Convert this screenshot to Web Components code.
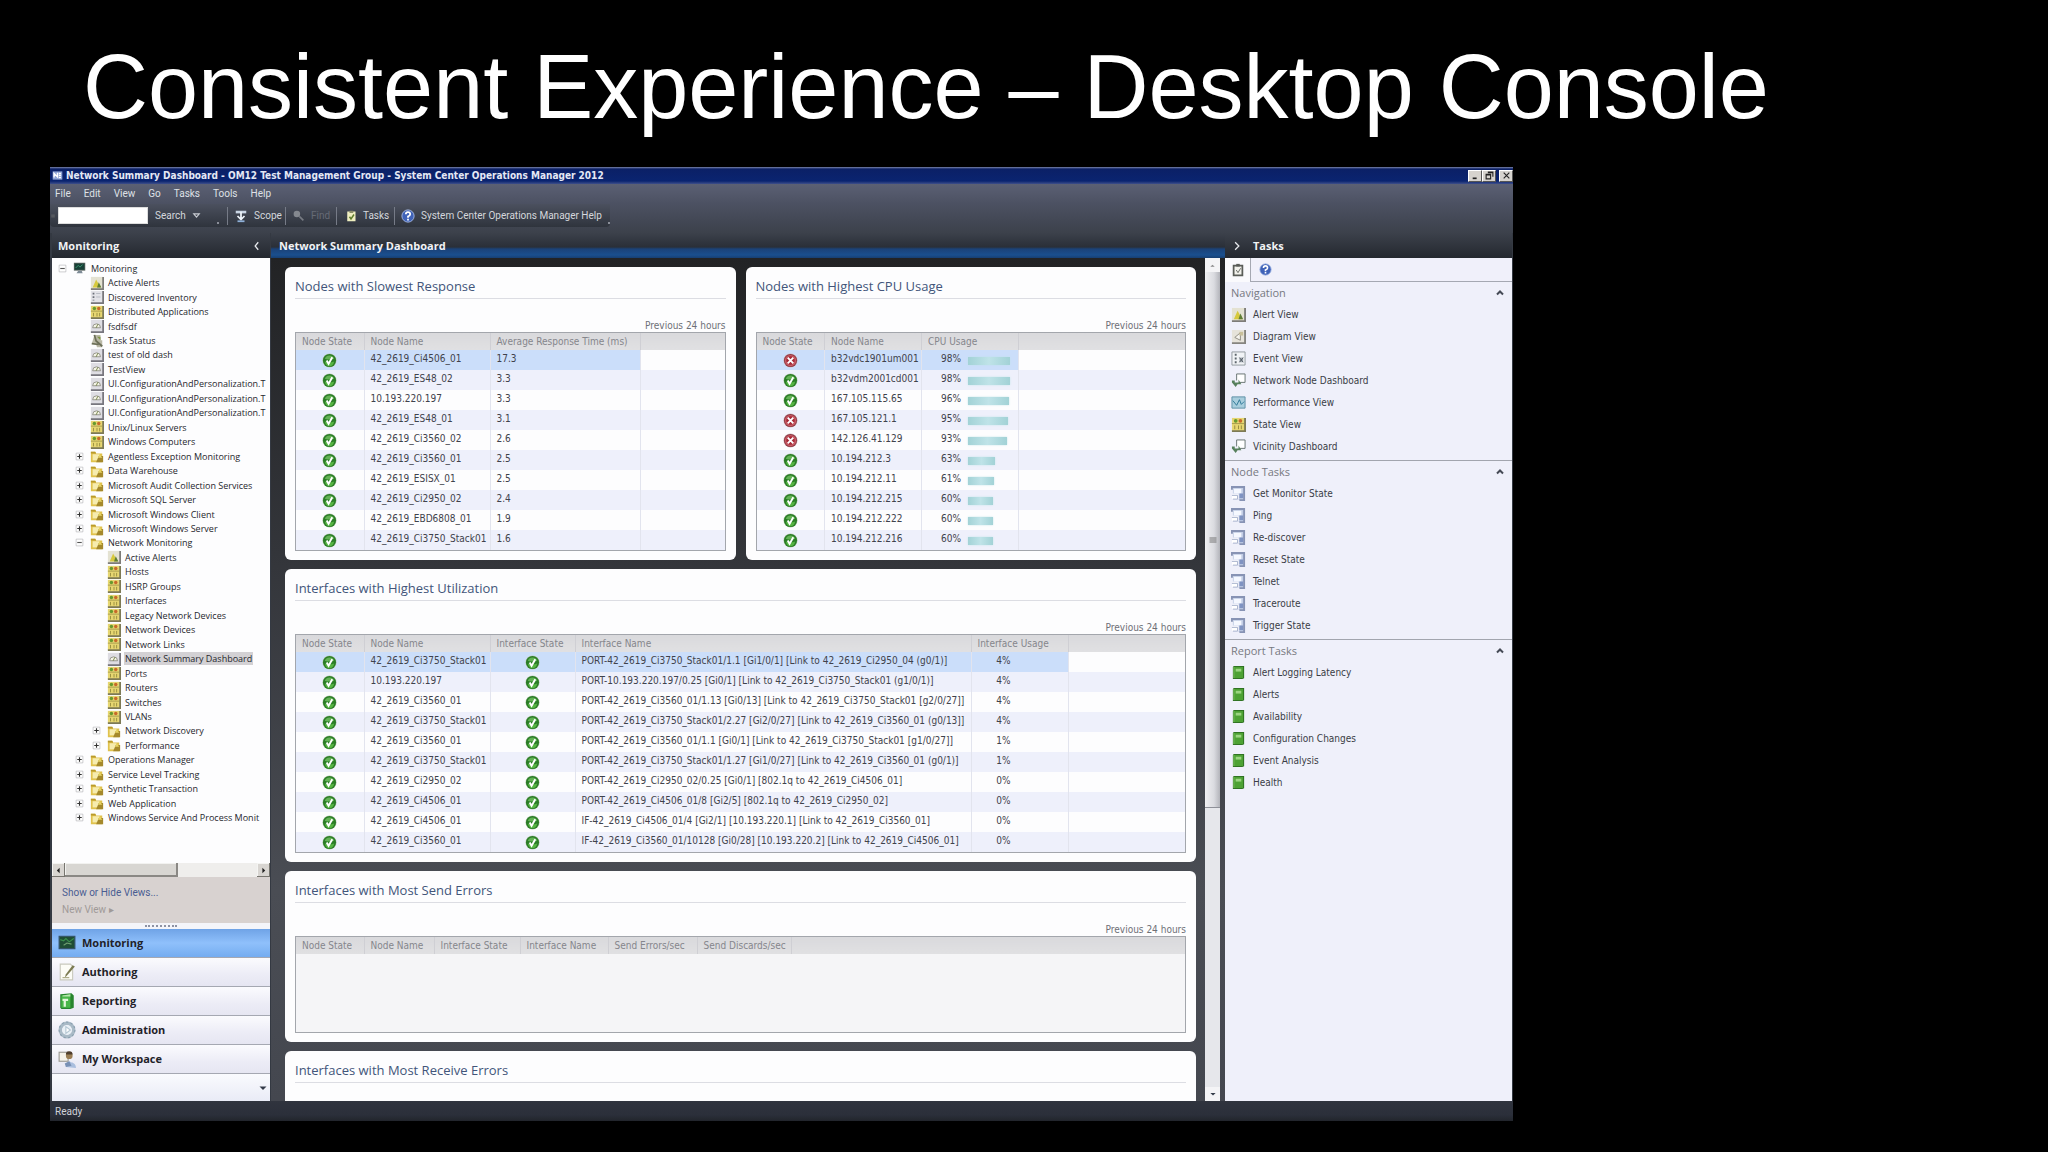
<!DOCTYPE html>
<html lang="en">
<head>
<meta charset="utf-8">
<title>Consistent Experience – Desktop Console</title>
<style>
html,body{margin:0;height:100%;background:#000}
body{font-family:"DejaVu Sans Condensed","Liberation Sans",sans-serif;font-size:10px;color:#3c3f48}
</style>
</head>
<body>
<slide-page></slide-page>
<script>
const ICONS={
 monitor:'<rect x="1" y="2" width="13" height="9" fill="#55605c"/><rect x="2" y="3" width="11" height="7" fill="#174037"/><path d="M3 8l3-3 2 2 3-3" stroke="#3f9b74" fill="none"/><path d="M6 11h4l1 3H4z" fill="#7e8b96"/>',
 alert:'<rect x="1" y="1" width="14" height="14" fill="#e4e2d2"/><path d="M15 1v14H1" fill="none" stroke="#7d7c78" stroke-width="2"/><path d="M7 4l5 9H3z" fill="#d6c93d"/><path d="M10 7l3 6H8z" fill="#5f7d34"/>',
 list:'<rect x="1" y="1" width="14" height="14" fill="#e3e3e8"/><path d="M15 1v14H1" fill="none" stroke="#77767a" stroke-width="2"/><path d="M4 3v9" stroke="#6c7078" stroke-dasharray="2 2" stroke-width="2"/><path d="M7 4h5M7 8h5" stroke="#b4b7c0"/>',
 state:'<rect x="1" y="1" width="14" height="14" fill="#e6d671"/><path d="M15 1v14H1" fill="none" stroke="#7d7a55" stroke-width="2"/><path d="M1 7h13" stroke="#a49a4c"/><circle cx="5" cy="4" r="2" fill="#679a2e"/><circle cx="10" cy="4" r="2" fill="#c86a2a"/><path d="M4 9v4M8 9v4M11 9v4" stroke="#94893c"/>',
 dash:'<rect x="1" y="1" width="14" height="14" fill="#dedde3"/><path d="M15 1v14H1" fill="none" stroke="#77767e" stroke-width="2"/><path d="M3 10a4 4 0 0 1 9 0z" fill="#f4f4e6" stroke="#8a8a80"/><path d="M7 10l2-4" stroke="#6b7a3a"/>',
 status:'<path d="M5 1h7v6h2v8H8l-1-3-5-1z" fill="#b9b8a6"/><path d="M5 1l2 7 7 6M2 11l8 1" stroke="#6c6f58" fill="none" stroke-width="2"/><path d="M8 3h4v4z" fill="#7f9447"/>',
 folder:'<path d="M1 3h5l1 2h7v10H1z" fill="#e0c24d"/><path d="M1 3h5l1 2H1z" fill="#b99a2c"/><rect x="3" y="6" width="8" height="7" fill="#f6ecae"/><path d="M10 8h5v7H7z" fill="#a5892c"/><path d="M11 6l3 4h-5z" fill="#e7d463"/>',
 ok:'<circle cx="8" cy="8" r="7.500" fill="#b9c9b4"/><circle cx="8" cy="8" r="7" fill="#2b7d26"/><path d="M3 6a5.500 5.500 0 0 1 10 0q-5 2-10 0z" fill="#7cc96a" opacity=".7"/><path d="M3 9q5 2 10 0-1 5-5 5T3 9z" fill="#57b543"/><path d="M5 8l2 3.500L11 4.500" stroke="#fff" stroke-width="2" fill="none"/>',
 bad:'<circle cx="8" cy="8" r="7.500" fill="#d0bcc0"/><circle cx="8" cy="8" r="7" fill="#8f3a44"/><circle cx="8" cy="8" r="6" fill="#c95a64"/><circle cx="8" cy="8" r="4.500" fill="#a52b38"/><path d="M5 5l6 6M11 5l-6 6" stroke="#fff" stroke-width="2"/>',
 diagram:'<rect x="1" y="1" width="14" height="14" fill="#e6e3da"/><path d="M15 1v14H1" fill="none" stroke="#85847f" stroke-width="2"/><path d="M4 9l6-5v8z" fill="#f6f4ee" stroke="#8d8b80"/><rect x="9" y="3" width="4" height="4" fill="#c9c09a"/>',
 event:'<rect x="1" y="1" width="14" height="14" fill="#f1f3f6"/><path d="M15 1v14H1V1z" fill="none" stroke="#8f979c"/><path d="M5 3v2M5 7v2M5 11v2" stroke="#5d656c" stroke-width="2"/><path d="M9 7h4v5H9z" fill="#a2aab2"/><path d="M9 7l4 5M13 7l-4 5" stroke="#525a62"/>',
 jump:'<path d="M6 8V1h9v9H9" fill="#fff" stroke="#65716f"/><path d="M1 8h3v2h4V7l3 5-4 0-2 3-4-5z" fill="#57805c"/>',
 perf:'<rect x="1" y="2" width="14" height="12" fill="#a9cedd"/><path d="M1 2v12h14V2z" fill="none" stroke="#5c8fa5"/><path d="M2 6l4 5 3-6 2 5 3-3" stroke="#2e7696" fill="none"/>',
 task:'<path d="M2 1h12v14H8V8H2z" fill="#c3cee6"/><path d="M1 4V1h13v14H9" fill="none" stroke="#8793b4" stroke-width="2"/><rect x="3" y="3" width="8" height="5" fill="#f5f8ff"/><path d="M1 9h7v5H1z" fill="#fff"/><path d="M1 10h6v4H2" fill="none" stroke="#a4b0cc"/><path d="M9 8h4v5H9z" fill="#7f93c2"/>',
 report:'<path d="M3 1h11v13l-2 1H2V2z" fill="#2c6d20"/><rect x="3" y="2" width="10" height="12" fill="#4da234"/><path d="M5 4h6v3H5z" fill="#9bd481"/><path d="M3 2v12" stroke="#80c266"/>',
 mon2:'<rect x="1" y="2" width="14" height="11" fill="#1f4e35"/><path d="M1 2h14v11H1z" fill="none" stroke="#35536a"/><path d="M2 5l3 1 2-2 3 3 4-3" fill="none" stroke="#3b8f4c"/><path d="M5 10l3-2 4 1" stroke="#6fa070" fill="none"/>',
 author:'<path d="M2 1h9l2 2v12H2z" fill="#fcfcf6" stroke="#c9c9bd"/><path d="M15 3L8 11l-2 2 1-3 6-8z" fill="#7c7b52"/><path d="M4 13h6" stroke="#a9a984"/>',
 book:'<path d="M2 2l10-1 2 2v11l-3 1H3l-1-1z" fill="#27842e"/><path d="M3 3l8-1v12H3z" fill="#48b749"/><path d="M4 6h5v2H7v5H5V8H4z" fill="#e3f6dc"/><path d="M4 3l7-1v2H4z" fill="#b7e6ae"/>',
 gear:'<circle cx="8" cy="8" r="6" fill="none" stroke="#a9bac6" stroke-width="3"/><circle cx="8" cy="8" r="7" fill="none" stroke="#8ba0b0" stroke-dasharray="2 2"/><circle cx="8" cy="8" r="4" fill="#e9f1f6"/><path d="M7 5l4 3-4 3z" fill="#fff" stroke="#b4c6d2"/>',
 user:'<rect x="1" y="2" width="8" height="8" fill="#f5f2ea" stroke="#9b9a94"/><path d="M7 15c0-4 2-6 5-4 2 0 4 2 4 5z" fill="#a9bede"/><circle cx="10" cy="5" r="3" fill="#9a7e55"/><path d="M7 4a3 3 0 0 1 6 0z" fill="#4d3c2b"/><path d="M6 12l4-2 2 4-5 1z" fill="#7890b5"/>',
 scope:'<path d="M2 2h12v3H2z" fill="#c9d5e4"/><path d="M8 3v8M4 8l4 4 4-4" stroke="#eef4fa" stroke-width="2" fill="none"/><path d="M4 14h8" stroke="#8fb0d8" stroke-width="2"/>',
 find:'<circle cx="6" cy="6" r="4" fill="#84888f"/><path d="M9 9l5 5" stroke="#777b83" stroke-width="2"/>',
 clip:'<rect x="3" y="2" width="11" height="13" fill="#efeec0"/><path d="M6 1h5v3H6z" fill="#8b8d68"/><path d="M6 9l2 3 4-6" stroke="#5f7c2c" stroke-width="2" fill="none"/>',
 cliptab:'<path d="M3 3h10v11H3z" fill="#f2f2ec" stroke="#5a5d58" stroke-width="2"/><path d="M6 1h4v3H6z" fill="#5a5d58"/><path d="M6 8l2 3 3-5" stroke="#5a5d58" fill="none"/>',
 help:'<circle cx="8" cy="8" r="7" fill="#3f62b8" stroke="#a9bde8"/><path d="M5.500 6q0-2.500 2.500-2.500T10.500 6Q10.500 7.500 8 8.500V10M8 11v2" stroke="#fff" stroke-width="2" fill="none"/>',
 app:'<rect x="1" y="2" width="14" height="12" fill="#8fa4d6"/><path d="M3 11V5l5 5V4M10 5h3M10 8h3M10 11h3" stroke="#fff" stroke-width="2" fill="none"/>',
 left:'<path d="M10 3L5 8l5 5z" fill="#222"/>',right:'<path d="M6 3l5 5-5 5z" fill="#222"/>',
 down:'<path d="M1 5h14l-7 7z" fill="#333a48"/>',up:'<path d="M3 11h10L8 6z" fill="#888"/>',
 chevl:'<path d="M10 2L5 8l5 6" stroke="#e8eaee" stroke-width="2" fill="none"/>',chevr:'<path d="M5 2l6 6-6 6" stroke="#e8eaee" stroke-width="2" fill="none"/>',
 chevu:'<path d="M2 11l6-6 6 6" stroke="#454a55" stroke-width="4" fill="none"/>',
 outl:'<path d="M3 5h10l-5 6z" fill="none" stroke="#c9ccd2" stroke-width="2"/>',
 min:'<path d="M3 13h7" stroke="#222" stroke-width="3"/>',
 rest:'<path d="M5 2h9v8M5 3h9M2 6h8v8H2zM2 7h8" stroke="#222" stroke-width="2" fill="none"/>',
 close:'<path d="M3 3l10 10M13 3L3 13" stroke="#222" stroke-width="2"/>',
 plus:'<path d="M2 2h12v12H2z" fill="#fff" stroke="#a9a9ad"/><path d="M4 8h8M8 4v8" stroke="#333" stroke-width="2"/>',
 minus:'<path d="M2 2h12v12H2z" fill="#fff" stroke="#a9a9ad"/><path d="M4 8h8" stroke="#555" stroke-width="2"/>',
 grip:'<path d="M1 4h14M1 8h14M1 12h14" stroke="#777" stroke-width="2"/>'
};
class Base extends HTMLElement{
  connectedCallback(){ if(this.shadowRoot) return; this.attachShadow({mode:'open'}).innerHTML='<style>*{box-sizing:border-box}'+this.css()+'</style>'+this.html(); }
  css(){return ':host{display:block}'} html(){return '<slot></slot>'}
}
const ic=(n,s=14)=>`<om-icon name="${n}" size="${s}"></om-icon>`;

customElements.define('om-icon',class extends Base{
  css(){const s=this.getAttribute('size')||14;return `:host{display:inline-block;flex:none;width:${s}px;height:${s}px}svg{display:block;width:100%;height:100%}`}
  html(){return `<svg viewBox="0 0 16 16" aria-hidden="true">${ICONS[this.getAttribute('name')]}</svg>`}
});

customElements.define('title-bar',class extends Base{
  css(){return `:host{display:flex;align-items:center;height:17px;padding:0 0 0 2px;background:linear-gradient(#7d86ab 0,#0b2066 2px,#0a2470 14px,#3f4f8a 17px);color:#e4e8f5;font-weight:700;white-space:nowrap}
  span{flex:1;padding-left:3px;line-height:18px}div{display:flex}
  button{width:14px;height:12px;margin:0;padding:0;border:1px solid #fff;border-right-color:#555;border-bottom-color:#555;background:#d6d3ce;display:grid;place-items:center}button:last-child{margin-left:3px}`}
  html(){return `${ic('app',11)}<span>Network Summary Dashboard - OM12 Test Management Group - System Center Operations Manager 2012</span><div><button aria-label="Minimize">${ic('min',9)}</button><button aria-label="Restore">${ic('rest',9)}</button><button aria-label="Close">${ic('close',9)}</button></div>`}
});

customElements.define('menu-bar',class extends Base{
  css(){return `:host{display:flex;height:20px;align-items:center;gap:13px;padding-left:5px}button{all:unset;font:10px/14px Roboto,"Liberation Sans",sans-serif;color:#dfe1e6}`}
  html(){return ['File','Edit','View','Go','Tasks','Tools','Help'].map(t=>`<button>${t}</button>`).join('')}
});

customElements.define('tool-bar',class extends Base{
  css(){return `:host{display:flex;height:23px;width:max-content;align-items:center;padding-left:1px;border-radius:0 0 4px 4px;background:linear-gradient(#4b505e,#3a3f4a 60%,#2f343d);font:10px/14px Roboto,"Liberation Sans",sans-serif;color:#d4d7dc}
  input{width:90px;height:17px;margin:0 7px 0 3px;padding:0 2px;border:1px solid #ddd;background:#fff;font:inherit}
  button{all:unset;display:flex;align-items:center;gap:6px;line-height:23px}
  i{width:2px;height:2px;background:#8a8e98;margin-top:14px}
  b{width:1px;height:18px;background:#767b87}`}
  html(){return `${ic('grip',4)}<input aria-label="Search text"><button style="width:62px">Search ${ic('outl',9)}</button><i></i><b style="margin:0 6px 0 8px"></b><button style="width:51px">${ic('scope',14)}Scope</button><b style="margin-right:6px"></b><button style="width:44px;color:#666b76">${ic('find',13)}Find</button><b style="margin-right:8px"></b><button style="width:49px">${ic('clip',12)}Tasks</button><b style="margin-right:6px"></b><button style="width:207px">${ic('help',14)}System Center Operations Manager Help</button><i></i>`}
});

customElements.define('pane-head',class extends Base{
  css(){return `:host{display:flex;align-items:center;height:25px;padding:0 8px 0 6px;font:700 11px/24px "Open Sans",sans-serif;color:#f1f2f4;background:linear-gradient(#3c414b,#24282f)}
  :host([strip]){padding-left:8px;background:linear-gradient(#3c414b,#2a2f38 14px,#1b4278 16px,#1a4f8e 22px,#173f72)}
  span{flex:1}:host([before]) span{padding-left:11px}:host([before]){padding-left:7px}`}
  html(){const t=`<span><slot></slot></span>`;return this.hasAttribute('strip')?t:this.hasAttribute('before')?ic('chevr',10)+t:t+ic('chevl',10)}
});

const TREE=[[0,'-','monitor','Monitoring'],[1,'','alert','Active Alerts'],[1,'','list','Discovered Inventory'],[1,'','state','Distributed Applications'],[1,'','dash','fsdfsdf'],[1,'','status','Task Status'],[1,'','dash','test of old dash'],[1,'','dash','TestView'],
...Array(3).fill([1,'','dash','UI.ConfigurationAndPersonalization.T']),[1,'','state','Unix/Linux Servers'],[1,'','state','Windows Computers'],
...['Agentless Exception Monitoring','Data Warehouse','Microsoft Audit Collection Services','Microsoft SQL Server','Microsoft Windows Client','Microsoft Windows Server'].map(t=>[1,'+','folder',t]),[1,'-','folder','Network Monitoring'],
[2,'','alert','Active Alerts'],...['Hosts','HSRP Groups','Interfaces','Legacy Network Devices','Network Devices','Network Links'].map(t=>[2,'','state',t]),[2,'','dash','Network Summary Dashboard',1],
...['Ports','Routers','Switches','VLANs'].map(t=>[2,'','state',t]),[2,'+','folder','Network Discovery'],[2,'+','folder','Performance'],
...['Operations Manager','Service Level Tracking','Synthetic Transaction','Web Application','Windows Service And Process Monit'].map(t=>[1,'+','folder',t])];

customElements.define('nav-tree',class extends Base{
  css(){return `:host{display:block;background:#fdfdfe;overflow:hidden;height:605px;padding-top:3px}
  ul{list-style:none;margin:0;padding:0;display:grid;grid-auto-rows:1fr;height:564px}
  li{display:flex;align-items:center;white-space:nowrap;font:9px/13px "Open Sans","Liberation Sans",sans-serif;color:#26272d;min-height:0}
  .l0{padding-left:6px}.l1{padding-left:23px}.l2{padding-left:40px}
  .tw{width:9px;display:flex;margin-right:6px}a{color:inherit;text-decoration:none;padding:0 1px;margin-left:3px}.sel a{background:#d3d1d4}`}
  html(){return '<ul>'+TREE.map(([l,x,i,t,s])=>`<li class="l${l}${s?' sel':''}"><span class="tw">${x?ic(x=='+'?'plus':'minus',9):''}</span>${ic(i,14)}<a href="#">${t}</a></li>`).join('')+'</ul>'}
});

customElements.define('nav-pane',class extends Base{
  css(){return `:host{display:flex;flex-direction:column;min-width:0}
  .hs{display:flex;height:14px;background:#efeeec}.hs button{all:unset;width:13px;display:grid;place-items:center;background:#d8d5d1;box-shadow:inset -1px -1px #77756f,inset 1px 1px #f4f4f2}.thumb{flex:0 1 113px;background:#d8d6d2;box-shadow:inset -2px -2px #8a8884,inset 1px 1px #f2f2f0}.sp{flex:1}
  .links{height:46px;background:#d8d2d0;padding:7px 0 0 10px;font:10px/17px Roboto,sans-serif}.links a{display:block;color:#4a5d92;text-decoration:none}.links a+a{color:#a09a98}
  .split{height:6px;background:#f4f5fa;display:grid;place-items:center}.split i{width:32px;border-top:2px dotted #8e93a5}
  nav button{all:unset;box-sizing:border-box;display:flex;align-items:center;gap:6px;width:100%;height:29px;padding-left:6px;border-bottom:1px solid #a5a8b2;background:linear-gradient(#fbfbfe,#ececf6 60%,#e6e6f2);font:700 11px/28px "Open Sans",sans-serif;color:#1f2229}
  nav button:first-child{background:linear-gradient(#6fa3e6,#8fc0fb 50%,#74acf0)}
  .more{flex:1;background:linear-gradient(#fafbfe,#e9ebf6);display:flex;justify-content:flex-end;align-items:center;padding-right:3px}`}
  html(){return `<pane-head>Monitoring</pane-head><nav-tree></nav-tree><div class="hs"><button aria-label="Left">${ic('left',9)}</button><div class="thumb"></div><div class="sp"></div><button aria-label="Right">${ic('right',9)}</button></div>
  <div class="links"><a href="#">Show or Hide Views...</a><a href="#">New View ▸</a></div><div class="split"><i></i></div>
  <nav>${[['mon2','Monitoring'],['author','Authoring'],['book','Reporting'],['gear','Administration'],['user','My Workspace']].map(([i,t])=>`<button>${ic(i,18)}${t}</button>`).join('')}</nav><div class="more">${ic('down',8)}</div>`}
});

const DATA={
 slow:{cols:[68,126,150],head:['Node State','Node Name','Average Response Time (ms)'],rows:[['42_2619_Ci4506_01','17.3'],['42_2619_ES48_02','3.3'],['10.193.220.197','3.3'],['42_2619_ES48_01','3.1'],['42_2619_Ci3560_02','2.6'],['42_2619_Ci3560_01','2.5'],['42_2619_ESISX_01','2.5'],['42_2619_Ci2950_02','2.4'],['42_2619_EBD6808_01','1.9'],['42_2619_Ci3750_Stack01','1.6']].map(r=>['ok',...r])},
 cpu:{cols:[68,97,97],head:['Node State','Node Name','CPU Usage'],rows:[['bad','b32vdc1901um001','98%',42],['ok','b32vdm2001cd001','98%',42],['ok','167.105.115.65','96%',41],['bad','167.105.121.1','95%',40],['bad','142.126.41.129','93%',39],['ok','10.194.212.3','63%',27],['ok','10.194.212.11','61%',26],['ok','10.194.212.215','60%',25],['ok','10.194.212.222','60%',25],['ok','10.194.212.216','60%',25]].map(([s,n,p,w])=>[s,n,{p,w}])},
 util:{cols:[68,126,85,396,97],head:['Node State','Node Name','Interface State','Interface Name','Interface Usage'],rows:[
 ['42_2619_Ci3750_Stack01','PORT-42_2619_Ci3750_Stack01/1.1 [Gi1/0/1] [Link to 42_2619_Ci2950_04 (g0/1)]','4%'],
 ['10.193.220.197','PORT-10.193.220.197/0.25 [Gi0/1] [Link to 42_2619_Ci3750_Stack01 (g1/0/1)]','4%'],
 ['42_2619_Ci3560_01','PORT-42_2619_Ci3560_01/1.13 [Gi0/13] [Link to 42_2619_Ci3750_Stack01 [g2/0/27]]','4%'],
 ['42_2619_Ci3750_Stack01','PORT-42_2619_Ci3750_Stack01/2.27 [Gi2/0/27] [Link to 42_2619_Ci3560_01 (g0/13]]','4%'],
 ['42_2619_Ci3560_01','PORT-42_2619_Ci3560_01/1.1 [Gi0/1] [Link to 42_2619_Ci3750_Stack01 [g1/0/27]]','1%'],
 ['42_2619_Ci3750_Stack01','PORT-42_2619_Ci3750_Stack01/1.27 [Gi1/0/27] [Link to 42_2619_Ci3560_01 (g0/1)]','1%'],
 ['42_2619_Ci2950_02','PORT-42_2619_Ci2950_02/0.25 [Gi0/1] [802.1q to 42_2619_Ci4506_01]','0%'],
 ['42_2619_Ci4506_01','PORT-42_2619_Ci4506_01/8 [Gi2/5] [802.1q to 42_2619_Ci2950_02]','0%'],
 ['42_2619_Ci4506_01','IF-42_2619_Ci4506_01/4 [Gi2/1] [10.193.220.1] [Link to 42_2619_Ci3560_01]','0%'],
 ['42_2619_Ci3560_01','IF-42_2619_Ci3560_01/10128 [Gi0/28] [10.193.220.2] [Link to 42_2619_Ci4506_01]','0%']].map(([a,b,c])=>['ok',a,'ok',b,{p:c,w:0}])},
 send:{cols:[68,70,86,88,89,94],head:['Node State','Node Name','Interface State','Interface Name','Send Errors/sec','Send Discards/sec'],rows:[]}
};
customElements.define('data-grid',class extends Base{
  css(){return `:host{display:block;border:1px solid #a3a6ac;background:#f5f5f7}:host([source=send]){height:97px}
  table{border-collapse:collapse;table-layout:fixed;width:100%}
  th{height:17px;padding:0 0 0 6px;text-align:left;font-weight:400;line-height:16px;color:#85868c;background:linear-gradient(#d9d9dc,#e0e0e2);border-right:1px solid #cfcfd4;white-space:nowrap}
  th:last-child,td:last-child{border-right:0}
  td{height:20px;padding:0 0 2px 6px;line-height:18px;border-right:1px solid #e2e4ee;white-space:nowrap;color:#3f424b}
  tbody tr{background:#fdfdfe}tbody tr:nth-child(even){background:#eef0fb}tbody tr:first-child td:not(:last-child){background:#cbdefa}
  td.s{padding:0;line-height:15px;text-align:center}td.s om-icon{vertical-align:middle}
  .u{display:flex;align-items:center}.u span{width:34px;text-align:right;padding-right:1px}.u i{height:8px;margin:4px 0 0 6px;background:linear-gradient(90deg,#a2d2d6,#bfe3e8 50%,#a2d2d6);box-shadow:0 0 2px #bfe3e8}
  .u i.z{display:none}`}
  html(){const d=DATA[this.getAttribute('source')];
   const cell=c=>c==='ok'||c==='bad'?`<td class="s">${ic(c,15)}</td>`:c.p?`<td><div class="u"><span>${c.p}</span><i class="${c.w?'':'z'}" style="width:${c.w}px"></i></div></td>`:`<td>${c}</td>`;
   return `<table><colgroup>${d.cols.map(w=>`<col style="width:${w}px">`).join('')}<col></colgroup><thead><tr>${d.head.map(h=>`<th>${h}</th>`).join('')}<th></th></tr></thead><tbody>${d.rows.map(r=>`<tr>${r.map(cell).join('')}<td></td></tr>`).join('')}</tbody></table>`}
});

customElements.define('dash-card',class extends Base{
  css(){return `:host{display:block;background:#fdfdfe;border-radius:6px;padding:8px 10px 9px;min-width:0}
  h2{margin:0;height:24px;border-bottom:1px solid #dcdde3;font:400 13px/22px "Open Sans",sans-serif;color:#42557a}
  p{margin:0;height:33px;padding-top:20px;line-height:13px;text-align:right;color:#6e7077}`}
  html(){return `<h2>${this.getAttribute('heading')}</h2>${this.childElementCount?'<p>Previous 24 hours</p>':''}<slot></slot>`}
});

customElements.define('dash-board',class extends Base{
  css(){return `:host{display:flex;flex-direction:column;min-width:0;overflow:hidden}
  .b{flex:1;min-height:0;display:flex;background:linear-gradient(#222325,#33353a 35%,#4a4d54 75%,#44474f);}
  .c{flex:1;min-width:0;display:grid;grid-template-columns:1fr 1fr;grid-template-rows:auto auto auto 1fr;gap:9px 10px;padding:9px 9px 0 14px;overflow:hidden}
  .w{grid-column:1/3}.w:last-child{border-radius:6px 6px 0 0}
  .v{width:15px;display:flex;flex-direction:column;background:#e6e7eb;margin-right:5px}.v div{flex:538 0 0;background:linear-gradient(90deg,#f0f0f2,#dadbe0 60%,#b3b4ba);border-bottom:1px solid #8e9098;display:grid;place-items:center}.v s{flex:280 0 0}.v button{all:unset;height:14px;display:grid;place-items:center;background:#f4f4f6}
  :host{background:#2c3038}`}
  html(){return `<pane-head strip>Network Summary Dashboard</pane-head><div class="b"><div class="c">
  <dash-card heading="Nodes with Slowest Response"><data-grid source="slow"></data-grid></dash-card>
  <dash-card heading="Nodes with Highest CPU Usage"><data-grid source="cpu"></data-grid></dash-card>
  <dash-card class="w" heading="Interfaces with Highest Utilization"><data-grid source="util"></data-grid></dash-card>
  <dash-card class="w" heading="Interfaces with Most Send Errors"><data-grid source="send"></data-grid></dash-card>
  <dash-card class="w" heading="Interfaces with Most Receive Errors"></dash-card></div>
  <div class="v"><button aria-label="Up">${ic('up',7)}</button><div>${ic('grip',8)}</div><s></s><button aria-label="Down">${ic('down',6)}</button></div></div>`}
});

customElements.define('task-group',class extends Base{
  css(){return `:host{display:block;padding:0 0 2px 6px;border-bottom:1px solid #a2a5ae}:host(:last-child){border:0}
  h3{margin:0;height:22px;display:flex;align-items:center;justify-content:space-between;padding-right:8px;font:400 11px/22px "Open Sans",sans-serif;color:#777981}
  a{display:flex;align-items:center;gap:7px;height:22px;padding-bottom:1px;color:#3a3d46;text-decoration:none}`}
  html(){return `<h3>${this.getAttribute('heading')}${ic('chevu',8)}</h3>`+this.getAttribute('items').split('|').map(s=>{const[i,t]=s.split(':');return `<a href="#">${ic(i,15)}${t}</a>`}).join('')}
});

customElements.define('task-pane',class extends Base{
  css(){return `:host{display:flex;flex-direction:column;background:#eff0fa}
  .t{display:flex;height:24px}.t button{all:unset;width:25px;display:grid;place-items:center;background:#fafafd}.t button+button{flex:1;justify-content:start;padding-left:8px;background:#f0f0fa;border-left:1px solid #a5a8b2;border-bottom:1px solid #a5a8b2}`}
  html(){const n=['Get Monitor State','Ping','Re-discover','Reset State','Telnet','Traceroute','Trigger State'].map(t=>'task:'+t).join('|');
  const r=['Alert Logging Latency','Alerts','Availability','Configuration Changes','Event Analysis','Health'].map(t=>'report:'+t).join('|');
  return `<pane-head before>Tasks</pane-head><div class="t"><button aria-label="Tasks">${ic('cliptab',14)}</button><button aria-label="Help">${ic('help',13)}</button></div>
  <task-group heading="Navigation" items="alert:Alert View|diagram:Diagram View|event:Event View|jump:Network Node Dashboard|perf:Performance View|state:State View|jump:Vicinity Dashboard"></task-group>
  <task-group heading="Node Tasks" items="${n}"></task-group><task-group heading="Report Tasks" items="${r}"></task-group>`}
});

customElements.define('console-window',class extends Base{
  css(){return `:host{display:flex;flex-direction:column;background:#30343e}
  .top{height:49px;background:linear-gradient(#5b6074,#4c5162 40%,#3c414b)}
  main{flex:1;min-height:0;display:grid;grid-template-columns:219px 1fr 287px;padding:0 1px 0 2px;background:#343942}
  nav-pane{margin-right:1px}
  footer{height:20px;padding:2px 0 0 5px;font:10px/18px Roboto,sans-serif;color:#d0d2d8;background:linear-gradient(#30343e,#2b2f3a 70%,#22252c)}`}
  html(){return `<title-bar></title-bar><div class="top"><menu-bar></menu-bar><tool-bar></tool-bar></div><main><nav-pane></nav-pane><dash-board></dash-board><task-pane></task-pane></main><footer>Ready</footer>`}
});

customElements.define('slide-page',class extends Base{
  css(){return `:host{display:flex;flex-direction:column;height:100vh;background:#000}
  h1{margin:0;padding:37px 0 0 83px;height:167px;font:400 90px/100px "Liberation Sans",Arial,sans-serif;color:#fff;white-space:nowrap}
  console-window{flex:1;min-height:0;margin:0 535px 31px 50px}`}
  html(){return `<h1>Consistent Experience – Desktop Console</h1><console-window></console-window>`}
});
</script>
</body>
</html>
